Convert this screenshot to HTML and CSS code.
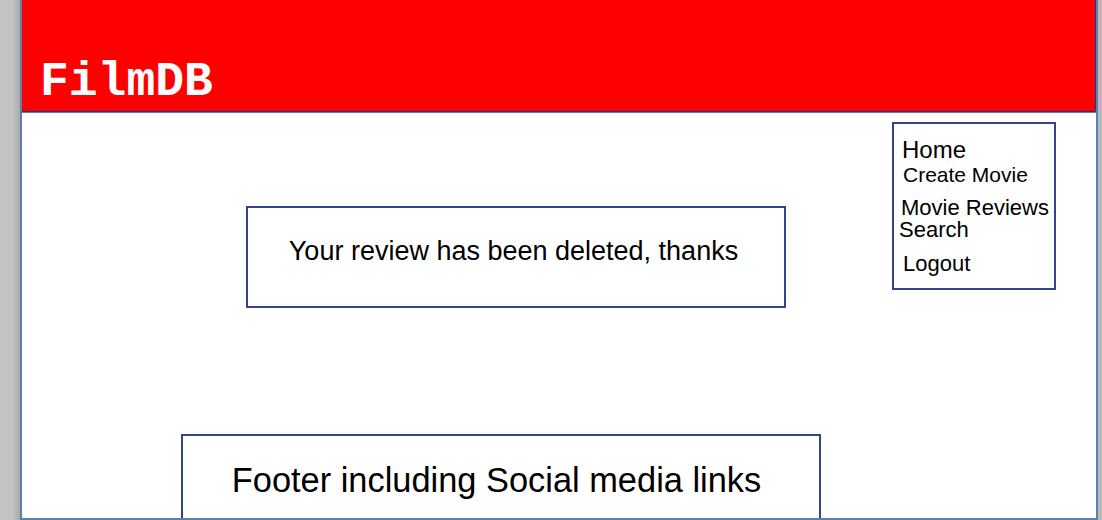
FILE: index.html
```html
<!DOCTYPE html>
<html lang="en">
<head>
<meta charset="utf-8">
<title>FilmDB</title>
<link rel="stylesheet" href="styles.css">
</head>
<body>
  <div class="gutter-left"></div>
  <div class="frame">
    <header class="header">
      <h1 class="logo">FilmDB</h1>
    </header>
    <main class="main">
      <div class="content">
        <div class="message">Your review has been deleted, thanks</div>
        <footer class="footer">Footer including Social media links</footer>
      </div>
      <nav class="nav">
        <a class="nav-item home">Home</a>
        <a class="nav-item create">Create Movie</a>
        <a class="nav-item reviews">Movie Reviews</a>
        <a class="nav-item search">Search</a>
        <a class="nav-item logout">Logout</a>
      </nav>
    </main>
  </div>
  <div class="gutter-right"></div>
</body>
</html>
```

FILE: styles.css
```css
html, body {
  margin: 0;
  padding: 0;
}
body {
  width: 1102px;
  height: 520px;
  overflow: hidden;
  display: flex;
  background: #bdbdbd;
  font-family: "Liberation Sans", Arial, sans-serif;
  color: #000;
}
.gutter-left {
  width: 20px;
  flex: none;
  background: linear-gradient(to right, #c5c5c5 0%, #c2c2c2 65%, #a9a9a9 100%);
}
.gutter-right {
  width: 4px;
  flex: none;
  background: #b9b9b9;
}
.frame {
  width: 1078px;
  height: 520px;
  box-sizing: border-box;
  flex: none;
  border: 2px solid #5a80ae;
  border-top: none;
  background: #fff;
  display: flex;
  flex-direction: column;
  overflow: hidden;
}
.header {
  flex: none;
  height: 106px;
  background: #ff0000;
  border-bottom: 1px solid #26338a;
  border-right: 1px solid #26338a;
  display: flex;
  align-items: flex-end;
  padding: 0 0 5px 18px;
}
.logo {
  margin: 0;
  font-family: "Courier New", "Nimbus Mono PS", "Nimbus Mono L", "FreeMono", "Liberation Mono", monospace;
  font-weight: bold;
  font-size: 48px;
  line-height: 48px;
  color: #fff;
}
.main {
  flex: 1;
  border-top: 1px solid #5a80ae;
  display: flex;
  align-items: flex-start;
  overflow: hidden;
}
.content {
  flex: 1;
  display: flex;
  flex-direction: column;
  align-items: flex-start;
}
.message {
  margin: 93px 0 0 224px;
  width: 540px;
  height: 102px;
  box-sizing: border-box;
  border: 2px solid #34428f;
  padding-top: 28px;
  padding-right: 5px;
  text-align: center;
  font-size: 27px;
  line-height: 30px;
}
.footer {
  margin: 126px 0 0 159px;
  width: 640px;
  height: 120px;
  box-sizing: border-box;
  border: 2px solid #34428f;
  padding-top: 24px;
  padding-right: 9px;
  text-align: center;
  font-size: 34.4px;
  line-height: 40px;
}
.nav {
  flex: none;
  margin: 9px 40px 0 0;
  width: 164px;
  height: 168px;
  box-sizing: border-box;
  border: 2px solid #34428f;
  padding: 15px 0 0 7px;
  display: flex;
  flex-direction: column;
  align-items: flex-start;
}
.nav-item {
  display: block;
  font-size: 22px;
  line-height: 22px;
  white-space: nowrap;
  color: #000;
}
.home {
  font-size: 24px;
  margin-left: 1px;
}
.create {
  font-size: 21px;
  margin: 3px 0 0 2px;
}
.reviews {
  margin: 11px 0 0 0;
}
.search {
  margin: 0 0 0 -2px;
}
.logout {
  margin: 12px 0 0 2px;
}
```
